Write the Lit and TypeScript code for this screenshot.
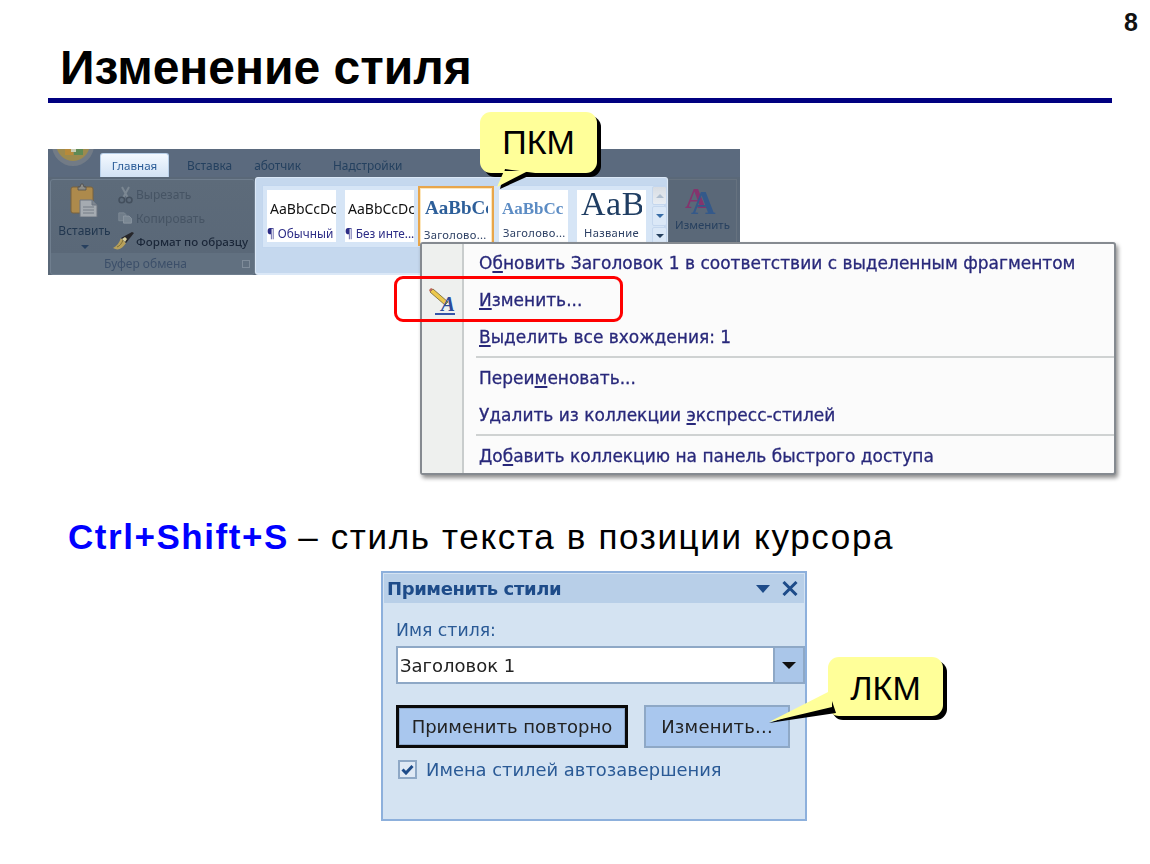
import { LitElement, html, css, svg } from "lit";
import { customElement } from "lit/decorators.js";

const caret = svg`<svg width="8" height="4" viewBox="0 0 8 4"><path d="M0 0h8L4 4z" fill="#27405f"/></svg>`;

@customElement("app-root")
export class AppRoot extends LitElement {
  static styles = css`
    :host { display: block; width: 1150px; height: 864px; background: #fff; overflow: hidden; font-family: "Liberation Sans", Arial, sans-serif; }
    .slide { position: relative; width: 1150px; height: 864px; box-sizing: border-box; padding: 0 38px 0 48px; display: flex; flex-direction: column; }
    .pageno { position: absolute; right: 12px; top: 8px; font-size: 25px; font-weight: 700; color: #111; }
    h1 { margin: 37px 0 0 12px; font-size: 48px; line-height: 62px; font-weight: 700; color: #000; letter-spacing: 0; height: 61px; white-space: nowrap; }
    .rule { height: 5px; background: #000080; width: 1064px; }

    .stage { position: relative; margin-top: 46px; height: 326px; width: 1080px; }
    .ribbon { width: 692px; height: 126px; background: #5a6878; font-family: "Noto Sans", sans-serif; filter: blur(.45px); overflow: hidden; display: flex; flex-direction: column; }
    .tabs { height: 28px; display: flex; align-items: flex-end; position: relative; flex: none; background: #5b6a7e; }
    .orb { position: absolute; left: 4px; top: -25px; width: 42px; height: 42px; border-radius: 50%; background: #727b86; box-sizing: border-box; display: flex; align-items: flex-end; justify-content: center; padding-bottom: 5px; }
    .orb svg { display: block; }
    .tab { font-size: 11.9px; color: #24405f; line-height: 24px; height: 24px; white-space: nowrap; }
    .tab.home { margin-left: 52px; width: 69px; box-sizing: border-box; text-align: center; background: linear-gradient(#f4f9ff, #d2e2f4); color: #2b5c97; border-radius: 3px 3px 0 0; border: 1px solid #b8cfe8; border-bottom: 0; font-size: 11.6px; }
    .tab.t2 { margin-left: 18px; }
    .tab.t3 { margin-left: 22px; }
    .tab.t4 { margin-left: 32px; }
    .rbody { flex: 1; display: flex; min-height: 0; }
    .clip { width: 205px; flex: none; box-sizing: border-box; margin: 2px 0 0 2px; border: 1px solid #6f7e8e; border-radius: 3px; background: linear-gradient(#5d6b7a, #5a6878 78%, #617080 78%); display: grid; grid-template-columns: 67px 1fr; grid-template-rows: 1fr 18px; color: #1c2a3e; }
    .paste { display: flex; flex-direction: column; align-items: center; padding-top: 3px; font-size: 12px; color: #22374f; gap: 7px; }
    .paste span { display: block; line-height: 14px; }
    .clipitems { display: flex; flex-direction: column; padding-top: 3px; font-size: 12px; }
    .clipitems div { height: 23.500px; display: flex; align-items: center; gap: 3px; white-space: nowrap; }
    .clipitems .off { color: #465464; }
    .clipitems .on { color: #1a2638; font-weight: 500; font-size: 11.6px; margin-left: -5px; gap: 1px; }
    .clipitems svg { flex: none; }
    .clipfoot { grid-column: 1 / 3; font-size: 12px; color: #3c4f69; text-align: center; line-height: 16px; position: relative; padding-right: 14px; }
    .launch { position: absolute; right: 4px; top: 4px; width: 6px; height: 6px; border: 1px solid #7f8c9a; }
    .styles { width: 413px; flex: none; background: #c5d8ee; border: 1px solid #dbe8f7; border-width: 1px 1px 2px 1px; border-radius: 3px; box-sizing: border-box; padding: 7px 0 0 6px; }
    .gallery { display: flex; height: 63px; background: #d6e5f6; border: 1px solid #c2d6ee; box-sizing: border-box; padding: 4px 0 0 4px; width: 403px; align-items: flex-start; }
    .cell { width: 69px; height: 52px; margin-right: 9px; background: #fff; flex: none; overflow: hidden; text-align: center; }
    .cell.sel { width: 76px; margin: -4px 5px 0 -5px; height: 60px; border: 2px solid #e8a64c; box-sizing: border-box; box-shadow: inset 0 0 0 1px #fde7bd; }
    .sample { height: 32px; line-height: 38px; white-space: nowrap; overflow: hidden; color: #111; font-size: 14px; margin: 0 0 0 3px; text-align: left; }
    .sel .sample { font-family: "Liberation Serif", serif; font-weight: 700; font-size: 19px; line-height: 36px; color: #2d5f9a; margin: 2px 4px 0 5px; }
    .c4 .sample { font-family: "Liberation Serif", serif; font-weight: 700; font-size: 17px; color: #5c8cc4; }
    .c5 .sample { font-family: "Liberation Serif", serif; font-size: 34px; color: #1f3d62; letter-spacing: .5px; line-height: 28px; margin: 0 4px 0 4px; }
    .lbl { font-size: 11.8px; line-height: 14px; color: #2c2c86; white-space: nowrap; overflow: hidden; text-align: left; margin-top: 4px; }
    .sel .lbl, .c4 .lbl, .c5 .lbl { color: #2c3f63; padding-left: 4px; font-size: 11.2px; letter-spacing: .3px; }
    .sel .lbl { margin-top: 6px; }
    .c5 .lbl { text-align: center; padding: 0; }
    .scroll { flex: none; width: 15px; height: 60px; margin-left: -3px; margin-top: -4px; display: flex; flex-direction: column; gap: 1px; }
    .scroll i { display: flex; align-items: center; justify-content: center; flex: 1; background: #dbe8f7; border: 1px solid #c5d7ee; border-radius: 2px; }
    .scroll i:first-child { background: linear-gradient(#d8dde3, #e8edf3); }
    .change { flex: 1; margin: 2px 3px 0 0; border: 1px solid #66727f; display: flex; flex-direction: column; align-items: center; padding-top: 4px; font-size: 11.4px; color: #27405f; gap: 1px; }

    .menu { position: absolute; left: 372px; top: 93px; width: 696px; height: 233px; box-sizing: border-box; background: #fbfbfb; border: 2px solid #858a90; border-radius: 3px; box-shadow: 2px 3px 4px rgba(0,0,0,.45); display: flex; font-family: "DejaVu Sans", sans-serif; filter: blur(.5px); }
    .strip { width: 40px; flex: none; background: #eef0ee; border-right: 2px solid #c9cdcd; display: flex; flex-direction: column; padding-top: 37px; }
    .strip svg { margin: 5px 0 0 6px; }
    .items { flex: 1; display: flex; flex-direction: column; padding-top: 1px; min-width: 0; }
    .mi { height: 37px; line-height: 37px; padding-left: 15px; font-size: 17px; color: #28287a; -webkit-text-stroke: .3px #28287a; white-space: nowrap; flex: none; }
    .mi u { text-decoration-thickness: 2px; text-underline-offset: 2px; }
    .sep { height: 2px; background: #cfd2d2; margin: 0 0 0 12px; flex: none; }
    .sep + .mi { margin-top: 2px; }
    .redbox { position: absolute; left: 346px; top: 127px; width: 229px; height: 46px; box-sizing: border-box; border: 3px solid #ff0000; border-radius: 9px; }

    .callout { position: absolute; font-family: "Liberation Sans", sans-serif; font-size: 34px; color: #000; width: 117px; height: 61px; box-sizing: border-box; background: #ffff99; border-radius: 11px; box-shadow: 4px 4px 0 #000; display: flex; align-items: center; justify-content: center; }
    .callout svg { position: absolute; overflow: visible; left: 0; top: 0; }
    .callout span { position: relative; }
    .pkm { left: 432px; top: -37px; }

    .hotkey { margin: 39px 0 0 20px; font-size: 35px; line-height: 46px; color: #000; letter-spacing: 1.65px; white-space: nowrap; height: 46px; }
    .hotkey b { color: #0000ff; letter-spacing: 1.55px; margin-right: -2px; }

    .panelwrap { position: relative; margin: 11px 0 0 333px; width: 426px; }
    .panel { width: 426px; height: 250px; box-sizing: border-box; background: #d4e3f2; border: 2px solid #8db0dc; font-family: "DejaVu Sans", sans-serif; filter: blur(.5px); }
    .ptitle { height: 29px; margin: 1px 1px 0; background: #b8cfe8; display: flex; align-items: center; padding-left: 3px; font-size: 18px; font-weight: 700; color: #1d4b89; }
    .ptitle span { flex: 1; letter-spacing: -.4px; white-space: nowrap; }
    .ptitle svg { margin-right: 6px; }
    .ptitle svg.menuarrow { margin-right: 12px; }
    .pbody { padding: 16px 0 0 13px; display: flex; flex-direction: column; }
    .plabel { font-size: 17.300px; line-height: 22px; color: #2a5a96; margin-bottom: 5px; }
    .combo { width: 409px; height: 38px; box-sizing: border-box; background: #fff; border: 2px solid #8ea8c6; display: flex; align-items: center; font-size: 18px; color: #222; padding-left: 2px; }
    .combo span { flex: 1; }
    .combo i { width: 28px; height: 100%; background: #aac6e9; border-left: 2px solid #8ea8c6; display: flex; align-items: center; justify-content: center; }
    .pbtns { display: flex; margin-top: 21px; height: 43px; }
    .btn { box-sizing: border-box; background: #a9c7ee; display: flex; align-items: center; justify-content: center; font-size: 18px; color: #222; white-space: nowrap; }
    .btn.def { width: 232px; border: 3px solid #0a0a0a; box-shadow: inset 0 0 0 1px #8ca8cc; }
    .btn.alt { width: 146px; margin-left: 16px; border: 2px solid #8ea8c6; letter-spacing: .2px; }
    .pcheck { display: flex; align-items: center; margin-top: 11px; margin-left: 2px; font-size: 17.900px; color: #2a5a96; gap: 9px; white-space: nowrap; }
    .cb { width: 19px; height: 19px; box-sizing: border-box; background: #dfe9f5; border: 2px solid #8ea8c6; flex: none; display: flex; align-items: center; justify-content: center; }

    .lkm { left: 447px; top: 86px; width: 115px; height: 59px; padding-top: 3px; }
  `;

  render() {
    return html`
      <div class="slide">
        <div class="pageno">8</div>
        <h1>Изменение стиля</h1>
        <div class="rule"></div>
        <div class="stage">
          <div class="ribbon">
            <div class="tabs">
              <div class="orb">
                <svg width="34" height="16" viewBox="0 0 34 16">
                  <path d="M0 0h34c-1 9-8 16-17 16S1 9 0 0z" fill="#9c8a4e"/>
                  <rect x="9" y="0" width="8" height="10" fill="#b78a3a"/>
                  <rect x="18" y="0" width="9" height="10" fill="#5f8a55"/>
                  <rect x="15" y="2" width="5" height="5" fill="#c9ccb4"/>
                </svg>
              </div>
              <div class="tab home">Главная</div>
              <div class="tab t2">Вставка</div>
              <div class="tab t3">аботчик</div>
              <div class="tab t4">Надстройки</div>
            </div>
            <div class="rbody">
              <div class="clip">
                <div class="paste">
                  <svg width="30" height="34" viewBox="0 0 30 34">
                    <rect x="1" y="4" width="22" height="26" rx="2" fill="#ad8a4c" stroke="#79633e"/>
                    <path d="M8 4h2l1-3h2l1 3h2v3H8z" fill="#8d8d88" stroke="#4e4e4e" stroke-width=".8"/>
                    <path d="M10 17h12l5 5v12H10z" fill="#a5abb1" stroke="#6c7480"/>
                    <path d="M22 17v5h5" fill="#7d8690" stroke="#6c7480"/>
                    <path d="M13 24h11M13 27h11M13 30h11" stroke="#747c86"/>
                  </svg>
                  <div><span>Вставить</span><span style="text-align:center">${caret}</span></div>
                </div>
                <div class="clipitems">
                  <div class="off">
                    <svg width="15" height="18" viewBox="0 0 15 18"><path d="M4 1l6 11M11 1L5 12" stroke="#7b8792" stroke-width="2" fill="none"/><circle cx="3.800" cy="14" r="2.800" fill="none" stroke="#434f5d" stroke-width="1.500"/><circle cx="11.200" cy="14" r="2.800" fill="none" stroke="#434f5d" stroke-width="1.500"/></svg>
                    Вырезать
                  </div>
                  <div class="off">
                    <svg width="15" height="12" viewBox="0 0 19 15"><path d="M1 1h7l2 2v8H1z" fill="#707d8a" stroke="#828e9a"/><path d="M7 5h7l3 3v6H7z" fill="#7a8793" stroke="#8f9aa5"/></svg>
                    Копировать
                  </div>
                  <div class="on">
                    <svg width="22" height="19" viewBox="0 0 22 19"><path d="M0 16c5 3 9 1 13-5L8 6C6 11 4 14 0 16z" fill="#b7a05a"/><path d="M4 15c3-1 5-4 6-7" stroke="#7f6f38" fill="none"/><path d="M8 6l5 5 8-10-2-1z" fill="#26262a"/><path d="M9 7l3 3 2-3-2-2z" fill="#d8d0a0"/></svg>
                    Формат по образцу
                  </div>
                </div>
                <div class="clipfoot">Буфер обмена<span class="launch"></span></div>
              </div>
              <div class="styles">
                <div class="gallery">
                  <div class="cell"><div class="sample">AaBbCcDc</div><div class="lbl">¶ Обычный</div></div>
                  <div class="cell"><div class="sample">AaBbCcDc</div><div class="lbl">¶ Без инте...</div></div>
                  <div class="cell sel"><div class="sample">AaBbCc</div><div class="lbl">Заголово...</div></div>
                  <div class="cell c4"><div class="sample">AaBbCc</div><div class="lbl">Заголово...</div></div>
                  <div class="cell c5"><div class="sample">AaB</div><div class="lbl">Название</div></div>
                  <div class="scroll">
                    <i><svg width="8" height="4" viewBox="0 0 8 4"><path d="M0 4h8L4 0z" fill="#b0bfd0"/></svg></i>
                    <i><svg width="8" height="4" viewBox="0 0 8 4"><path d="M0 0h8L4 4z" fill="#3a6ea8"/></svg></i>
                    <i>${caret}</i>
                  </div>
                </div>
              </div>
              <div class="change">
                <svg width="36" height="32" viewBox="0 0 36 32" font-family="Liberation Serif, serif" font-weight="700" style="overflow:visible">
                  <text x="0" y="24" font-size="30" fill="#84346e">A</text>
                  <text x="6" y="30" font-size="34" fill="#34598a">A</text>
                </svg>
                Изменить
              </div>
            </div>
          </div>

          <div class="callout pkm">
            <svg width="117" height="90" viewBox="0 0 117 90">
              <path d="M17 76L50 61h10L22 56z" fill="#000" transform="translate(3 1)"/>
              <path d="M24 59L17 75 48 59z" fill="#ffff99"/>
            </svg>
            <span>ПКМ</span>
          </div>

          <div class="menu">
            <div class="strip">
              <svg width="30" height="30" viewBox="0 0 30 30">
                <path d="M5 3l15 13-3 3L2 6z" fill="#ecc84c" stroke="#6f6333" stroke-width=".8"/>
                <path d="M2 6l3-3-2-1-2 2z" fill="#c0695a"/>
                <text x="13" y="25" font-family="Liberation Serif, serif" font-style="italic" font-weight="700" font-size="21" fill="#2c4b9a">A</text>
                <rect x="7" y="27" width="20" height="2" fill="#3554a8"/>
              </svg>
            </div>
            <div class="items">
              <div class="mi">О<u>б</u>новить Заголовок 1 в соответствии с выделенным фрагментом</div>
              <div class="mi"><u>И</u>зменить...</div>
              <div class="mi"><u>В</u>ыделить все вхождения: 1</div>
              <div class="sep"></div>
              <div class="mi">Переи<u>м</u>еновать...</div>
              <div class="mi">Удалить из коллекции <u>э</u>кспресс-стилей</div>
              <div class="sep"></div>
              <div class="mi">До<u>б</u>авить коллекцию на панель быстрого доступа</div>
            </div>
          </div>
          <div class="redbox"></div>
        </div>

        <div class="hotkey"><b>Ctrl+Shift+S</b> – стиль текста в позиции курсора</div>

        <div class="panelwrap">
          <div class="panel">
            <div class="ptitle">
              <span>Применить стили</span>
              <svg class="menuarrow" width="14" height="8" viewBox="0 0 14 8"><path d="M0 0h14L7 8z" fill="#1d4b89"/></svg>
              <svg width="16" height="15" viewBox="0 0 16 15"><path d="M1.500 1l13 13M14.500 1l-13 13" stroke="#1d4b89" stroke-width="3"/></svg>
            </div>
            <div class="pbody">
              <div class="plabel">Имя стиля:</div>
              <div class="combo"><span>Заголовок 1</span><i><svg width="14" height="7" viewBox="0 0 14 7"><path d="M0 0h14L7 7z" fill="#111"/></svg></i></div>
              <div class="pbtns">
                <div class="btn def">Применить повторно</div>
                <div class="btn alt">Изменить...</div>
              </div>
              <div class="pcheck">
                <div class="cb"><svg width="13" height="11" viewBox="0 0 13 11"><path d="M1.500 5.500l3.500 3.500 6.500-7" fill="none" stroke="#1d4b89" stroke-width="3"/></svg></div>
                Имена стилей автозавершения
              </div>
            </div>
          </div>
          <div class="callout lkm">
            <svg width="115" height="59" viewBox="0 0 115 59">
              <path d="M4 44L-59 66 8 56z" fill="#000"/>
              <path d="M4 33L-59 65 4 50z" fill="#ffff99"/>
            </svg>
            <span>ЛКМ</span>
          </div>
        </div>
      </div>
    `;
  }
}
